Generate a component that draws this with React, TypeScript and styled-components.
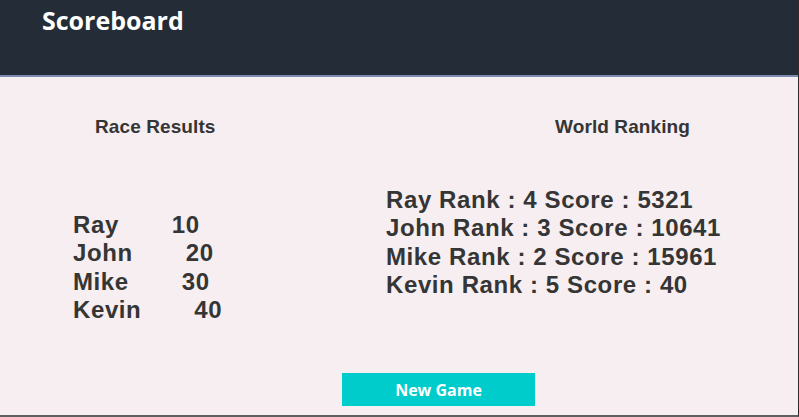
import React from "react";
import styled, { createGlobalStyle } from "styled-components";

const GlobalStyle = createGlobalStyle`
  html, body {
    margin: 0;
    padding: 0;
    background: #f6eef0;
  }
  * { box-sizing: border-box; }
`;

const Page = styled.div`
  width: 799px;
  height: 417px;
  display: flex;
  flex-direction: column;
  background: #f6eef0;
  border-right: 1px solid #2c2c2c;
  border-bottom: 2px solid #5f5f5f;
  overflow: hidden;
`;

const Header = styled.header`
  height: 77px;
  flex: none;
  background: #232c37;
  border-bottom: 2px solid #7d8cae;
  padding: 3px 0 0 42px;
`;

const Title = styled.h1`
  margin: 0;
  font-family: "Open Sans", sans-serif;
  font-weight: 700;
  font-size: 25px;
  color: #ffffff;
`;

const Main = styled.main`
  flex: 1;
  display: flex;
  flex-direction: column;
`;

const Columns = styled.div`
  flex: 1;
  display: flex;
  padding-top: 39px;
`;

const Column = styled.section<{ $width: number; $pad: number }>`
  width: ${(p) => p.$width}px;
  padding-left: ${(p) => p.$pad}px;
  display: flex;
  flex-direction: column;
`;

const Heading = styled.h2<{ $indent: number }>`
  margin: 0 0 0 ${(p) => p.$indent}px;
  font-family: "Liberation Sans", Arial, sans-serif;
  font-weight: 700;
  font-size: 19px;
  line-height: 22px;
  color: #353535;
  letter-spacing: 0.1px;
`;

const List = styled.ul<{ $top: number }>`
  list-style: none;
  margin: ${(p) => p.$top}px 0 0 0;
  padding: 0;
  font-family: "Liberation Sans", Arial, sans-serif;
  font-weight: 700;
  font-size: 24px;
  letter-spacing: 0.6px;
  line-height: 28.3px;
  color: #353535;
`;

const Row = styled.li<{ $gap?: number }>`
  display: flex;
  gap: ${(p) => p.$gap ?? 0}px;
  white-space: nowrap;
`;

const Footer = styled.div`
  display: flex;
  padding: 0 0 9px 342px;
`;

const Button = styled.button`
  width: 193px;
  height: 33px;
  border: none;
  background: #00cccc;
  color: #ffffff;
  font-family: "Open Sans", sans-serif;
  font-weight: 700;
  font-size: 16px;
  cursor: pointer;
  padding: 0;
`;

const race = [
  { name: "Ray", score: 10 },
  { name: "John", score: 20 },
  { name: "Mike", score: 30 },
  { name: "Kevin", score: 40 },
];

const world = [
  { name: "Ray", rank: 4, score: 5321 },
  { name: "John", rank: 3, score: 10641 },
  { name: "Mike", rank: 2, score: 15961 },
  { name: "Kevin", rank: 5, score: 40 },
];

export default function App() {
  return (
    <>
      <GlobalStyle />
      <Page>
        <Header>
          <Title>Scoreboard</Title>
        </Header>
        <Main>
          <Columns>
            <Column $width={386} $pad={73}>
              <Heading $indent={22}>Race Results</Heading>
              <List $top={73}>
                {race.map((r) => (
                  <Row key={r.name} $gap={53}>
                    <span>{r.name}</span>
                    <span>{r.score}</span>
                  </Row>
                ))}
              </List>
            </Column>
            <Column $width={412} $pad={0}>
              <Heading $indent={169}>World Ranking</Heading>
              <List $top={48}>
                {world.map((w) => (
                  <Row key={w.name}>
                    <span>
                      {w.name} Rank : {w.rank} Score : {w.score}
                    </span>
                  </Row>
                ))}
              </List>
            </Column>
          </Columns>
          <Footer>
            <Button>New Game</Button>
          </Footer>
        </Main>
      </Page>
    </>
  );
}
